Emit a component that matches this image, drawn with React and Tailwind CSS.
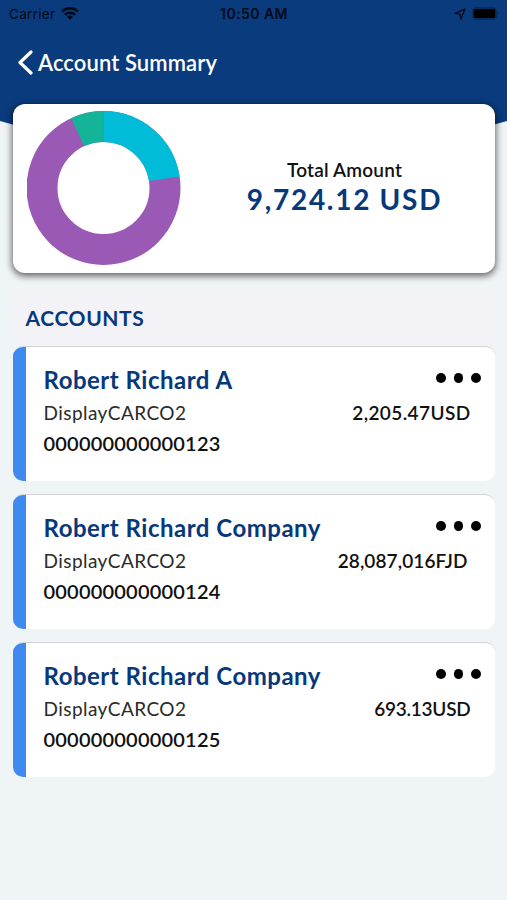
const accounts = [
  { id: 1, name: 'Robert Richard A', display: 'DisplayCARCO2', number: '000000000000123', amount: '2,205.47USD', amountClass: 'tracking-[0.4px]' },
  { id: 2, name: 'Robert Richard Company', display: 'DisplayCARCO2', number: '000000000000124', amount: '28,087,016FJD', amountClass: 'tracking-[0.1px] pr-[3px]' },
  { id: 3, name: 'Robert Richard Company', display: 'DisplayCARCO2', number: '000000000000125', amount: '693.13USD', amountClass: 'tracking-[-0.25px]' },
];

function StatusBar() {
  return (
    <div className="grid h-7 grid-cols-3 items-center pl-[9px] pr-2 font-['Inter',sans-serif] text-[#020a18]">
      <div className="flex items-center gap-[6px]">
        <span className="text-[13.5px] tracking-[0.3px]">Carrier</span>
        <svg width="18" height="14" viewBox="0 0 18 14" fill="none" stroke="currentColor" strokeWidth="2.6">
          <path d="M1 4.500a11.400 11.400 0 0 1 16 0" />
          <path d="M4 7.700a7.200 7.200 0 0 1 10 0" />
          <path d="M9 12.800 6.100 9.900a4.100 4.100 0 0 1 5.800 0z" fill="currentColor" stroke="none" />
        </svg>
      </div>
      <span className="pb-px text-center text-[14px] font-semibold tracking-[0.45px]">10:50 AM</span>
      <div className="flex items-center justify-end gap-[6px] pb-px">
        <svg width="12" height="12" viewBox="0 0 12 12" fill="none" stroke="currentColor" strokeWidth="1.3" strokeLinejoin="round">
          <path d="M11 1 6.800 11 6 6.200 1 5.400z" />
        </svg>
        <svg width="27" height="13" viewBox="0 0 27 13">
          <rect x="0.5" y="0.5" width="24" height="12" rx="3.2" fill="none" stroke="currentColor" strokeOpacity="0.3" />
          <rect x="1.6" y="1.8" width="21.8" height="9.4" rx="1.8" fill="#000" />
          <path d="M25.600 4.500v4c1.400-.5 1.400-3.500 0-4z" fill="currentColor" fillOpacity="0.4" />
        </svg>
      </div>
    </div>
  );
}

function Donut() {
  return (
    <svg width="154" height="154" viewBox="-76.5 -77 154 154" className="shrink-0">
      <g fill="none" strokeWidth="31">
        <circle r="61.5" stroke="#9b59b6" />
        <path d="M0-61.500A61.500 61.500 0 0 1 60.800-9.200" stroke="#00bcd9" />
        <path d="M-25.800-55.800A61.500 61.500 0 0 1 0-61.500" stroke="#13b497" />
      </g>
    </svg>
  );
}

function AccountCard({ account }) {
  return (
    <div className="flex h-[135px] overflow-hidden rounded-[10px] border-t border-[#d3d3d6] bg-white">
      <div className="w-[12.5px] shrink-0 bg-[#3f8aef]" />
      <div className="flex-1 pl-[18px] pr-[14.5px] pt-[18px]">
        <div className="flex h-[30px] justify-between">
          <h3 className="text-[24px] font-bold leading-[29px] tracking-[0.5px] text-[#07387c]">{account.name}</h3>
          <div className="flex gap-2 pt-2">
            <span className="size-[9.5px] rounded-full bg-black" />
            <span className="size-[9.5px] rounded-full bg-black" />
            <span className="size-[9.5px] rounded-full bg-black" />
          </div>
        </div>
        <div className="flex h-[36px] items-center justify-between pr-[10px] text-[19px] text-[#111]">
          <span className="tracking-[0.45px] text-[#2a2a2a]">{account.display}</span>
          <span className={`font-semibold ${account.amountClass}`}>{account.amount}</span>
        </div>
        <p className="text-[20px] font-semibold leading-[24px] tracking-[0.2px] text-[#111]">{account.number}</p>
      </div>
    </div>
  );
}

export default function App() {
  return (
    <main className="h-[900px] w-[507px] overflow-hidden bg-[#eff4f7] font-['Lato',sans-serif]">
      <header className="h-[103px] bg-[#0a3b7d]">
        <StatusBar />
        <div className="flex h-[69px] items-center gap-1 pl-[17px] text-white">
          <svg width="17" height="26" viewBox="0 0 17 26" fill="none" stroke="currentColor" strokeWidth="3.2" strokeLinecap="round" strokeLinejoin="round">
            <path d="M14 2 3 12.500l11 10.500" />
          </svg>
          <h1 className="text-[22px] font-semibold tracking-[0.1px]">Account Summary</h1>
        </div>
      </header>
      <svg width="507" height="57" viewBox="0 0 507 57" className="block">
        <path d="M0 0H507V18Q253 93 0 18z" fill="#0a3b7d" />
      </svg>

      <section className="relative ml-[13px] mr-3 -mt-[56px] flex h-[169px] rounded-[12px] bg-white pl-[14px] pt-[7px] shadow-[0_2px_7px_1px_rgba(0,0,0,0.6)]">
        <Donut />
        <div className="flex-1 pl-[13px] pt-[47px] text-center">
          <p className="text-[19px] font-semibold leading-[24px] tracking-[0.2px] text-[#111]">Total Amount</p>
          <p className="text-[28px] font-bold leading-[35px] tracking-[1.7px] text-[#07387c]">9,724.12 USD</p>
        </div>
      </section>

      <section className="ml-[13px] mr-3 mt-4">
        <h2 className="flex h-[57px] items-center bg-[#f2f2f7] pl-[12.5px] text-[21px] font-bold tracking-[0.6px] text-[#07387c]">ACCOUNTS</h2>
        <div className="flex flex-col gap-[13px]">
          {accounts.map((account) => (
            <AccountCard key={account.id} account={account} />
          ))}
        </div>
      </section>
    </main>
  );
}
